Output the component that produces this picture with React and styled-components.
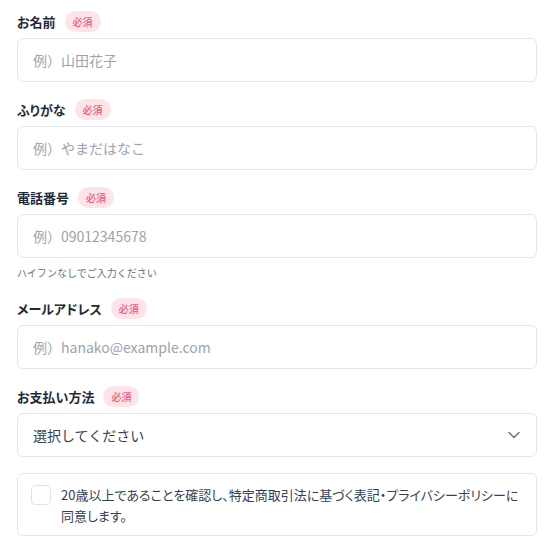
import styled, { createGlobalStyle } from "styled-components";
import { ChevronDown } from "lucide-react";

const Global = createGlobalStyle`
  * { box-sizing: border-box; }
  body {
    margin: 0;
    background: #ffffff;
    font-family: "Noto Sans CJK JP", "Noto Sans", sans-serif;
    color: #1f2937;
  }
`;

const Form = styled.form`
  width: 537px;
  padding: 10px 0 0 17px;
  display: flex;
  flex-direction: column;
  gap: 16px;
`;

const Field = styled.div`
  display: flex;
  flex-direction: column;
`;

const LabelRow = styled.div`
  display: flex;
  align-items: center;
  gap: 9px;
  height: 22px;
  margin-bottom: 6px;
`;

const Label = styled.label`
  font-size: 13px;
  font-weight: 700;
  color: #1e293b;
  font-feature-settings: "palt";
`;

const Badge = styled.span`
  display: inline-flex;
  align-items: center;
  height: 21px;
  padding: 0 8px;
  border-radius: 11px;
  background: #fde4e9;
  color: #f0587d;
  font-size: 10px;
  font-weight: 500;
`;

const Input = styled.input`
  width: 100%;
  height: 44px;
  padding: 0 15px;
  border: 1px solid #e3e6ea;
  border-radius: 6px;
  font-family: inherit;
  font-size: 14px;
  color: #1f2937;
  outline: none;
  background: #fff;

  &::placeholder {
    color: #9ca3af;
  }
`;

const Hint = styled.p`
  margin: 7px 0 0;
  font-size: 10px;
  line-height: 16px;
  color: #6b7280;
`;

const Select = styled.div`
  height: 44px;
  padding: 0 12px 0 15px;
  border: 1px solid #e3e6ea;
  border-radius: 6px;
  display: flex;
  align-items: center;
  justify-content: space-between;
  font-size: 14px;
  color: #374151;
  background: #fff;

  svg {
    color: #64748b;
  }
`;

const Agree = styled.label`
  display: flex;
  align-items: flex-start;
  gap: 10px;
  padding: 10px 13px 9px;
  border: 1px solid #e3e6ea;
  border-radius: 6px;
  font-size: 13px;
  line-height: 21px;
  color: #334155;
  font-feature-settings: "palt";
`;

const Box = styled.span`
  flex: none;
  width: 20px;
  height: 20px;
  margin-top: 1px;
  border: 1px solid #dfe3e8;
  border-radius: 4px;
  background: #fff;
`;

const fields = [
  { label: "お名前", placeholder: "例）山田花子" },
  { label: "ふりがな", placeholder: "例）やまだはなこ" },
  { label: "電話番号", placeholder: "例）09012345678", hint: "ハイフンなしでご入力ください" },
  { label: "メールアドレス", placeholder: "例）hanako@example.com" },
];

export default function App() {
  return (
    <>
      <Global />
      <Form>
        {fields.map((f) => (
          <Field key={f.label}>
            <LabelRow>
              <Label>{f.label}</Label>
              <Badge>必須</Badge>
            </LabelRow>
            <Input placeholder={f.placeholder} />
            {f.hint && <Hint>{f.hint}</Hint>}
          </Field>
        ))}
        <Field>
          <LabelRow>
            <Label>お支払い方法</Label>
            <Badge>必須</Badge>
          </LabelRow>
          <Select>
            <span>選択してください</span>
            <ChevronDown size={20} strokeWidth={1.8} />
          </Select>
        </Field>
        <Agree>
          <Box />
          <span>
            20歳以上であることを確認し、特定商取引法に基づく表記・プライバシーポリシーに同意します。
          </span>
        </Agree>
      </Form>
    </>
  );
}
